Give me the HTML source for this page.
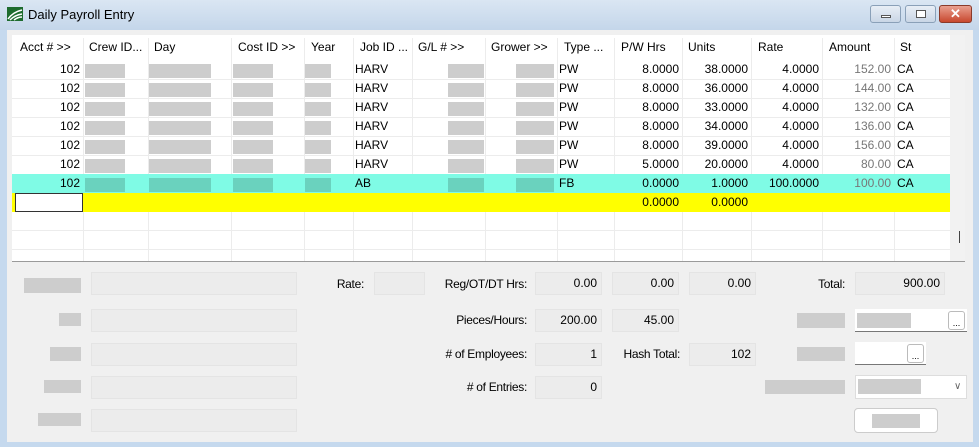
<!DOCTYPE html><html><head><style>
*{box-sizing:border-box;margin:0;padding:0}
body{width:979px;height:447px;overflow:hidden;background:#c5d9ee;font-family:"Liberation Sans",sans-serif;font-size:12px;color:#000;position:relative}
.a{position:absolute}
.tb{left:0;top:0;width:979px;height:30px;background:linear-gradient(#dae6f3,#c4d6ea)}
.win{left:7px;top:30px;width:966px;height:412px;background:#f0f0f0}
.grid{left:12px;top:35px;width:953px;height:227px;background:#fff;border-bottom:1px solid #9a9a9a}
.gs{left:950px;top:35px;width:15px;height:226px;background:#f2f2f2}
.cell{position:absolute;height:19px;line-height:19px;white-space:nowrap;overflow:hidden;padding:0 3px}
.r{text-align:right}
.bl{position:absolute;background:#cdcdcd;height:14px}
.vl{position:absolute;top:38px;width:1px;height:223px;background:#ececec}
.hl{position:absolute;left:12px;width:938px;height:1px;background:#ececec}
.box{position:absolute;height:23px;background:#ececec;border:1px solid #e4e4e4;line-height:21px;text-align:right;padding-right:4px}
.lbl{position:absolute;line-height:22px;text-align:right;font-size:12px;letter-spacing:-0.3px}
.bt{position:absolute;background:#fff;border:1px solid #bbb;border-radius:3px;font-size:9px;text-align:center;line-height:14px}
</style></head><body>
<div class="a tb"></div>
<svg class="a" style="left:7px;top:7px" width="16" height="14" viewBox="0 0 16 14"><rect width="16" height="14" fill="#1d6b2e"/><path d="M1 12 Q6 5 15 3 M3 13 Q8 8 15 7 M7 13 Q11 10 15 10" stroke="#fff" stroke-width="1.5" fill="none"/></svg>
<div class="a" style="left:28px;top:7px;font-size:13px">Daily Payroll Entry</div>
<div class="a" style="left:870px;top:5px;width:31px;height:18px;border:1px solid #8aa0b8;border-radius:3px;background:linear-gradient(#e8eef6,#c9d6e6)"><div class="a" style="left:10px;top:9px;width:10px;height:3px;border:1px solid #555;background:#fff"></div></div>
<div class="a" style="left:905px;top:5px;width:31px;height:18px;border:1px solid #8aa0b8;border-radius:3px;background:linear-gradient(#e8eef6,#c9d6e6)"><div class="a" style="left:10px;top:4px;width:10px;height:8px;border:1px solid #555;background:#fff"></div></div>
<div class="a" style="left:939px;top:5px;width:33px;height:18px;border:1px solid #8a3a2a;border-radius:3px;background:linear-gradient(#e9a090,#c8482e);color:#fff;font-weight:bold;text-align:center;line-height:16px;font-size:13px">✕</div>
<div class="a win"></div>
<div class="a grid"></div>
<div class="a gs"></div>
<div class="a" style="left:959px;top:231px;width:1px;height:12px;background:#444"></div>
<div class="vl" style="left:83px"></div><div class="vl" style="left:148px"></div><div class="vl" style="left:231px"></div><div class="vl" style="left:304px"></div><div class="vl" style="left:353px"></div><div class="vl" style="left:412px"></div><div class="vl" style="left:485px"></div><div class="vl" style="left:557px"></div><div class="vl" style="left:614px"></div><div class="vl" style="left:682px"></div><div class="vl" style="left:751px"></div><div class="vl" style="left:822px"></div><div class="vl" style="left:894px"></div>
<div class="hl" style="top:79px"></div><div class="hl" style="top:98px"></div><div class="hl" style="top:117px"></div><div class="hl" style="top:136px"></div><div class="hl" style="top:155px"></div><div class="hl" style="top:230px"></div><div class="hl" style="top:249px"></div>
<div class="cell" style="left:17px;top:38px">Acct # &gt;&gt;</div>
<div class="cell" style="left:86px;top:38px">Crew ID...</div>
<div class="cell" style="left:151px;top:38px">Day</div>
<div class="cell" style="left:235px;top:38px">Cost ID &gt;&gt;</div>
<div class="cell" style="left:308px;top:38px">Year</div>
<div class="cell" style="left:357px;top:38px">Job ID ...</div>
<div class="cell" style="left:415px;top:38px">G/L # &gt;&gt;</div>
<div class="cell" style="left:488px;top:38px">Grower &gt;&gt;</div>
<div class="cell" style="left:561px;top:38px">Type ...</div>
<div class="cell" style="left:618px;top:38px">P/W Hrs</div>
<div class="cell" style="left:685px;top:38px">Units</div>
<div class="cell" style="left:755px;top:38px">Rate</div>
<div class="cell" style="left:826px;top:38px">Amount</div>
<div class="cell" style="left:897px;top:38px">St</div>
<div class="a" style="left:12px;top:174px;width:938px;height:19px;background:#7ffbe5"></div>
<div class="a" style="left:12px;top:193px;width:938px;height:19px;background:#ffff00"></div>
<div class="a" style="left:15px;top:193px;width:68px;height:19px;background:#fff;border:1px solid #333"></div>
<div id="rows"></div>
<script>
var d=[["HARV","PW","8.0000","38.0000","4.0000","152.00"],["HARV","PW","8.0000","36.0000","4.0000","144.00"],["HARV","PW","8.0000","33.0000","4.0000","132.00"],["HARV","PW","8.0000","34.0000","4.0000","136.00"],["HARV","PW","8.0000","39.0000","4.0000","156.00"],["HARV","PW","5.0000","20.0000","4.0000","80.00"],["AB","FB","0.0000","1.0000","100.0000","100.00"]];
var h="";
d.forEach(function(r,i){var y=60+i*19;var g=i==6?"#6ad2be":"#cdcdcd";
h+='<div class="cell r" style="left:12px;width:71px;top:'+y+'px">102</div>';
[[85,40],[149,62],[233,40],[305,26],[448,36],[516,38]].forEach(function(b){h+='<div class="bl" style="left:'+b[0]+'px;width:'+b[1]+'px;top:'+(y+4)+'px;background:'+g+'"></div>'});
h+='<div class="cell" style="left:352px;top:'+y+'px">'+r[0]+'</div>';
h+='<div class="cell" style="left:556px;top:'+y+'px">'+r[1]+'</div>';
h+='<div class="cell r" style="left:614px;width:68px;top:'+y+'px">'+r[2]+'</div>';
h+='<div class="cell r" style="left:682px;width:69px;top:'+y+'px">'+r[3]+'</div>';
h+='<div class="cell r" style="left:751px;width:71px;top:'+y+'px">'+r[4]+'</div>';
h+='<div class="cell r" style="left:822px;width:72px;top:'+y+'px;color:#777">'+r[5]+'</div>';
h+='<div class="cell" style="left:894px;top:'+y+'px">CA</div>';});
h+='<div class="cell r" style="left:614px;width:68px;top:193px">0.0000</div><div class="cell r" style="left:682px;width:69px;top:193px">0.0000</div>';
document.getElementById("rows").innerHTML=h;
</script>
<div class="bl" style="left:24px;top:278px;width:57px;height:15px"></div>
<div class="bl" style="left:59px;top:313px;width:22px;height:13px"></div>
<div class="bl" style="left:50px;top:347px;width:31px;height:14px"></div>
<div class="bl" style="left:44px;top:380px;width:37px;height:13px"></div>
<div class="bl" style="left:38px;top:413px;width:43px;height:13px"></div>
<div class="box" style="left:91px;top:272px;width:206px"></div>
<div class="box" style="left:91px;top:309px;width:206px"></div>
<div class="box" style="left:91px;top:343px;width:206px"></div>
<div class="box" style="left:91px;top:376px;width:206px"></div>
<div class="box" style="left:91px;top:409px;width:206px"></div>
<div class="lbl" style="left:300px;width:64px;top:273px">Rate:</div>
<div class="box" style="left:374px;top:272px;width:51px"></div>
<div class="lbl" style="left:400px;width:127px;top:273px">Reg/OT/DT Hrs:</div>
<div class="box" style="left:535px;top:272px;width:67px">0.00</div>
<div class="box" style="left:612px;top:272px;width:67px">0.00</div>
<div class="box" style="left:689px;top:272px;width:67px">0.00</div>
<div class="lbl" style="left:760px;width:85px;top:273px">Total:</div>
<div class="box" style="left:855px;top:272px;width:90px">900.00</div>
<div class="lbl" style="left:400px;width:127px;top:309px">Pieces/Hours:</div>
<div class="box" style="left:535px;top:309px;width:67px">200.00</div>
<div class="box" style="left:612px;top:309px;width:67px">45.00</div>
<div class="lbl" style="left:400px;width:127px;top:343px"># of Employees:</div>
<div class="box" style="left:535px;top:343px;width:67px">1</div>
<div class="lbl" style="left:600px;width:80px;top:343px">Hash Total:</div>
<div class="box" style="left:689px;top:343px;width:67px">102</div>
<div class="lbl" style="left:400px;width:127px;top:376px"># of Entries:</div>
<div class="box" style="left:535px;top:376px;width:67px">0</div>
<div class="bl" style="left:797px;top:313px;width:48px;height:15px"></div>
<div class="a" style="left:855px;top:309px;width:112px;height:23px;background:#fff;border-bottom:1px solid #777"></div>
<div class="bl" style="left:857px;top:313px;width:54px;height:15px"></div>
<div class="bt" style="left:948px;top:311px;width:17px;height:19px;line-height:22px">...</div>
<div class="bl" style="left:797px;top:347px;width:48px;height:14px"></div>
<div class="a" style="left:855px;top:342px;width:71px;height:23px;background:#fff;border-bottom:1px solid #777"></div>
<div class="bt" style="left:907px;top:344px;width:17px;height:19px;line-height:22px">...</div>
<div class="bl" style="left:765px;top:380px;width:80px;height:14px"></div>
<div class="a" style="left:855px;top:375px;width:112px;height:24px;background:#fff;border:1px solid #ddd"></div>
<div class="bl" style="left:858px;top:379px;width:63px;height:15px"></div>
<div class="a" style="left:954px;top:381px;font-size:10px;color:#666">&#8744;</div>
<div class="a" style="left:854px;top:408px;width:84px;height:25px;background:#fff;border:1px solid #ccc;border-radius:4px"></div>
<div class="bl" style="left:872px;top:414px;width:48px;height:14px"></div>
</body></html>
